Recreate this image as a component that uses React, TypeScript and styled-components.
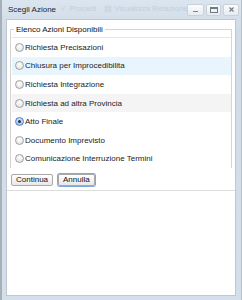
import React from "react";
import styled, { createGlobalStyle } from "styled-components";

const GlobalStyle = createGlobalStyle`
  html, body {
    margin: 0;
    padding: 0;
    background: #ffffff;
  }
  body {
    font-family: "Liberation Sans", Arial, sans-serif;
  }
`;

const Window = styled.div`
  width: 242px;
  height: 300px;
  box-sizing: border-box;
  display: flex;
  flex-direction: column;
  background: linear-gradient(#dbe5ef, #cfdbe7 30px, #d3dfea);
  border-left: 2px solid #a7b0b9;
  border-right: 1px solid #b5c0cb;
  padding: 0 5px 4px 4px;
`;

const Header = styled.div`
  height: 17px;
  flex: none;
  display: flex;
  align-items: center;
  position: relative;
`;

const Title = styled.span`
  font-size: 8px;
  color: #1a2531;
  margin-left: 2px;
  margin-top: 1px;
`;

const Ghost = styled.span<{ $left: number }>`
  position: absolute;
  left: ${(p) => p.$left}px;
  top: 4px;
  font-size: 8px;
  color: #c0cfdd;
  white-space: nowrap;
`;

const Tools = styled.div`
  margin-left: auto;
  margin-right: -3px;
  display: flex;
  gap: 2px;
  margin-top: 2px;
  position: relative;
`;

const ToolButton = styled.div<{ $w: number }>`
  width: ${(p) => p.$w}px;
  height: 12px;
  box-sizing: border-box;
  border: 1px solid #c9d2db;
  border-radius: 2px;
  background: linear-gradient(#fbfcfd, #e6ebf0);
  display: flex;
  align-items: center;
  justify-content: center;
  color: #7a848e;
`;

const MinGlyph = styled.span`
  width: 5px;
  height: 1px;
  margin-top: 3px;
  background: #7a848e;
`;

const MaxGlyph = styled.span`
  width: 6px;
  height: 3px;
  border: 1px solid #6f7983;
  border-top-width: 2px;
`;

const Body = styled.div`
  flex: 1;
  background: #ffffff;
  border: 1px solid #bfc8d1;
  margin-top: 2px;
  display: flex;
  flex-direction: column;
`;

const Fieldset = styled.fieldset`
  margin: 5px 3px 0 3px;
  padding: 0;
  border: 1px solid #d4d4d4;
  border-bottom: none;
  min-width: 0;
`;

const Legend = styled.legend`
  font-size: 8px;
  color: #111;
  padding: 0 2px;
  margin-left: 3px;
`;

const List = styled.div`
  margin: 3px 0 0 1px;
  border-top: 1px solid #e6e6e6;
  display: flex;
  flex-direction: column;
`;

const Row = styled.label<{ $bg?: string }>`
  height: 18.6px;
  display: flex;
  align-items: center;
  padding-left: 3px;
  background: ${(p) => p.$bg || "transparent"};
  font-size: 8px;
  color: #222;
`;

const Radio = styled.span<{ $on?: boolean }>`
  width: 7px;
  height: 7px;
  border-radius: 50%;
  border: 1px solid #a0a0a0;
  background: radial-gradient(circle at 50% 35%, #ffffff, #dcdcdc);
  margin-right: 1px;
  display: flex;
  align-items: center;
  justify-content: center;
  flex: none;
  &::after {
    content: "";
    display: ${(p) => (p.$on ? "block" : "none")};
    width: 3px;
    height: 3px;
    border-radius: 50%;
    background: #1b2f52;
  }
  ${(p) =>
    p.$on
      ? `border-color: #5b7fb3; background: radial-gradient(circle at 50% 35%, #d9ecff, #8fb6e6);`
      : ""}
`;

const Buttons = styled.div`
  display: flex;
  gap: 5px;
  padding: 6px 0 4px 4px;
  border-bottom: 1px solid #dcdcdc;
`;

const Button = styled.button<{ $focus?: boolean }>`
  height: 12px;
  padding: 0 4px;
  font-family: "Liberation Sans", Arial, sans-serif;
  font-size: 8px;
  color: #111;
  border: 1px solid #a9a9a9;
  border-radius: 2px;
  background: linear-gradient(#ffffff, #e8e8e8);
  line-height: 10px;
  box-shadow: ${(p) => (p.$focus ? "0 0 0 1px #7fa8dc" : "none")};
`;

const items = [
  { label: "Richiesta Precisazioni" },
  { label: "Chiusura per Improcedibilita", bg: "#e9f5fd" },
  { label: "Richiesta Integrazione" },
  { label: "Richiesta ad altra Provincia", bg: "#f4f4f4" },
  { label: "Atto Finale", on: true },
  { label: "Documento Imprevisto" },
  { label: "Comunicazione Interruzione Termini" },
];

export default function App() {
  return (
    <>
      <GlobalStyle />
      <Window>
        <Header>
          <Title>Scegli Azione</Title>
          <Ghost $left={54}>✓ Procedi</Ghost>
          <Ghost $left={98}>▤ Visualizza Relazione Is</Ghost>
          <Tools>
            <ToolButton $w={17}>
              <MinGlyph />
            </ToolButton>
            <ToolButton $w={15}>
              <MaxGlyph />
            </ToolButton>
            <ToolButton $w={16}>
              <svg width="5" height="5" viewBox="0 0 5 5">
                <path d="M0.5 0.5 L4.5 4.5 M4.5 0.5 L0.5 4.5" stroke="#6f7983" strokeWidth="1.1" />
              </svg>
            </ToolButton>
          </Tools>
        </Header>
        <Body>
          <Fieldset>
            <Legend>Elenco Azioni Disponibili</Legend>
            <List>
              {items.map((it, i) => (
                <Row key={i} $bg={it.bg}>
                  <Radio $on={it.on} />
                  {it.label}
                </Row>
              ))}
            </List>
          </Fieldset>
          <Buttons>
            <Button>Continua</Button>
            <Button $focus>Annulla</Button>
          </Buttons>
        </Body>
      </Window>
    </>
  );
}
